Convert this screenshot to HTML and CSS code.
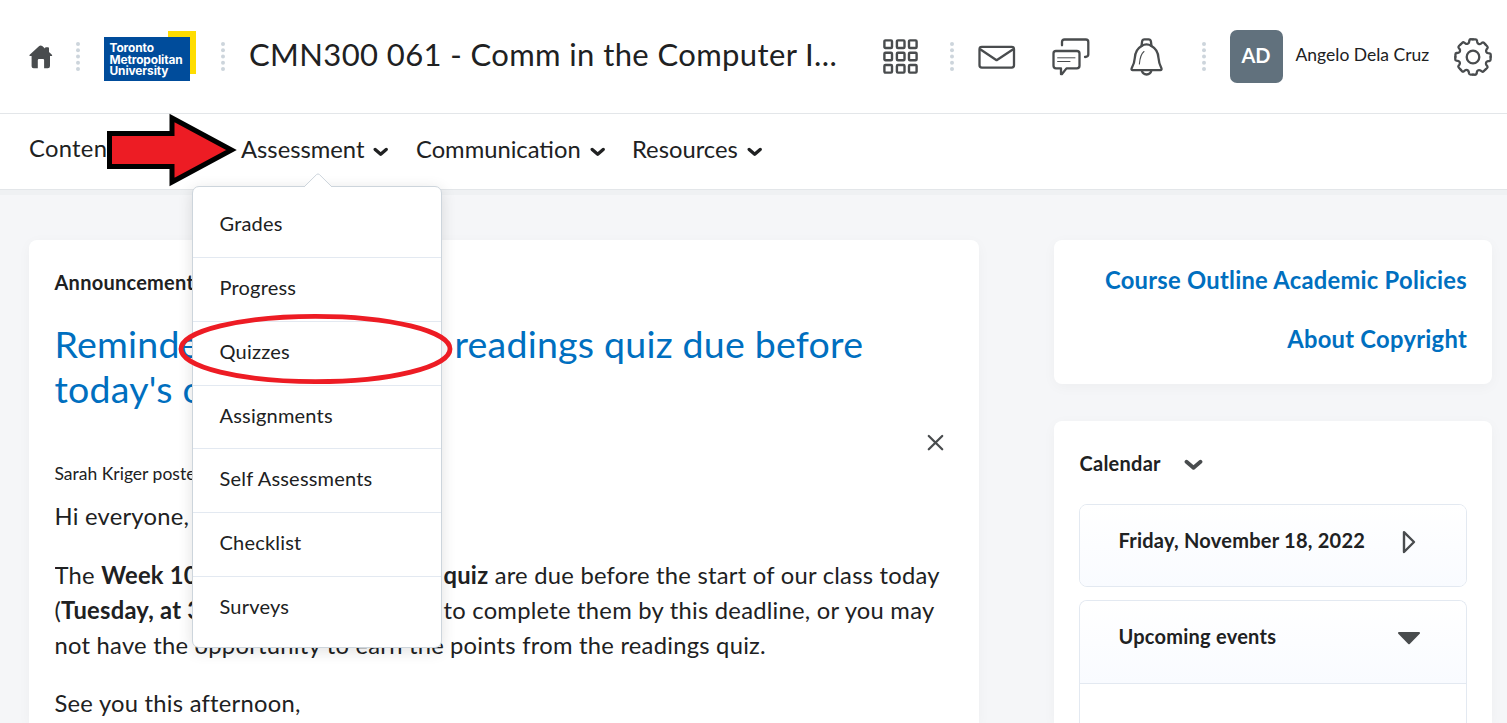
FILE: index.html
```html
<!DOCTYPE html>
<html lang="en">
<head>
<meta charset="utf-8">
<title>CMN300 061 - Comm in the Computer I...</title>
<link rel="stylesheet" href="styles.css">
</head>
<body>
<svg class="defs" width="0" height="0" aria-hidden="true">
  <defs>
    <g id="dots" fill="#cdd5dc"><circle cx="2" cy="2" r="2"/><circle cx="2" cy="8.3" r="2"/><circle cx="2" cy="14.5" r="2"/><circle cx="2" cy="20.8" r="2"/><circle cx="2" cy="27" r="2"/></g>
    <path id="chev" d="M2.2 2.4L7.7 7.2L13.2 2.4" fill="none" stroke-width="3.3" stroke-linecap="round" stroke-linejoin="round"/>
    <path id="tooth" d="M0-17.6H2.4Q3.8-17.6 4-16.4L4.2-15Q4.5-13.6 5.6-13.1Q6.9-12.6 8-13.4L9.1-14.3Q10.1-15 11-14.1L12.5-12.5"/>
  </defs>
</svg>

<header class="topbar">
  <svg class="icon home" width="24" height="24" viewBox="0 0 24 24"><path d="M10.2 1.1Q11.7-.1 13.2 1.1L16 3.5V3.1Q16 2.2 17 2.2H19Q20 2.2 20 3.2V7L22.9 9.7Q23.6 10.8 22.5 11.1H21V21Q21 23.3 18.8 23.3H15.1V15.2Q15.1 14.1 14 14.1H10Q8.8 14.1 8.8 15.2V23.3H4.6Q2.6 23.3 2.6 21.2V11.1H1.1Q0 10.8.7 9.7Z" fill="#494c4e"/></svg>
  <svg class="dots d1" width="4" height="29"><use href="#dots"/></svg>
  <div class="logo"><div class="logo-mark">Toronto<br>Metropolitan<br>University</div></div>
  <svg class="dots d2" width="4" height="29"><use href="#dots"/></svg>
  <div class="course-title">CMN300 061 - Comm in the Computer I...</div>
  <svg class="icon apps" width="36" height="36" viewBox="0 0 36 36" fill="none" stroke="#494c4e" stroke-width="2.4">
    <rect x="1.4" y="1.4" width="7.6" height="7.6" rx="1"/><rect x="13.9" y="1.4" width="7.6" height="7.6" rx="1"/><rect x="26" y="1.4" width="7.6" height="7.6" rx="1"/>
    <rect x="1.4" y="13.7" width="7.6" height="7.6" rx="1"/><rect x="13.9" y="13.7" width="7.6" height="7.6" rx="1"/><rect x="26" y="13.7" width="7.6" height="7.6" rx="1"/>
    <rect x="1.4" y="26" width="7.6" height="7.6" rx="1"/><rect x="13.9" y="26" width="7.6" height="7.6" rx="1"/><rect x="26" y="26" width="7.6" height="7.6" rx="1"/>
  </svg>
  <svg class="dots d3" width="4" height="29"><use href="#dots"/></svg>
  <svg class="icon mail" width="38" height="24" viewBox="0 0 38 24" fill="none" stroke="#494c4e" stroke-width="2.3" stroke-linejoin="round"><rect x="1.5" y="1.9" width="34.5" height="20.7" rx="2.3"/><path d="M2.2 4.2L18.6 15.2L35.2 4.2"/></svg>
  <svg class="icon chat" width="38" height="38" viewBox="0 0 38 38" fill="none" stroke="#494c4e" stroke-width="2.3" stroke-linecap="round" stroke-linejoin="round"><path d="M10 7.3V4Q10 1.5 12.5 1.5H33.8Q36.3 1.5 36.3 4V16.5Q36.3 18.8 33 19"/><path d="M4 13H24.8Q27.5 13 27.5 15.6V27.8Q27.5 30.4 24.8 30.4H14.5L9.8 36.2H9V30.4H4Q1.5 30.4 1.5 27.8V15.6Q1.5 13 4 13Z"/><path d="M5.6 19.8H23M5.6 23.5H18" stroke-width="1"/></svg>
  <svg class="icon bell" width="34" height="38" viewBox="0 0 34 38" fill="none" stroke="#494c4e" stroke-width="2.3" stroke-linecap="round" stroke-linejoin="round"><path d="M11.5 8L12.1 3.4Q12.4 1.4 14.5 1.4H18.5Q20.6 1.4 20.9 3.4L21.5 8"/><path d="M11.5 8Q16.5 4.6 21.5 8C26.5 10.7 28.2 14.8 28.5 20Q28.7 24.7 31.5 30.5Q31.8 32.1 30.5 32.1H2.6Q1.2 32.1 1.6 30.5Q4.6 24.7 4.8 20C5.1 14.8 6.8 10.7 11.5 8Z"/><path d="M11.8 32.6C13 37.8 20.2 37.8 21.4 32.6"/><path d="M14 13.5C10.7 16 9.9 20 9.4 26" stroke-width="1.1"/></svg>
  <svg class="dots d4" width="4" height="29"><use href="#dots"/></svg>
  <div class="avatar">AD</div>
  <div class="user-name">Angelo Dela Cruz</div>
  <svg class="icon gear" width="38" height="38" viewBox="-19 -19 38 38" fill="none" stroke="#494c4e" stroke-width="2.3" stroke-linecap="round"><circle r="6.3"/><use href="#tooth"/><use href="#tooth" transform="rotate(45)"/><use href="#tooth" transform="rotate(90)"/><use href="#tooth" transform="rotate(135)"/><use href="#tooth" transform="rotate(180)"/><use href="#tooth" transform="rotate(225)"/><use href="#tooth" transform="rotate(270)"/><use href="#tooth" transform="rotate(315)"/></svg>
</header>

<nav class="navbar">
  <div class="nav-item content">Content</div>
  <div class="nav-item assessment">Assessment<svg class="chev" width="16" height="10" stroke="#202122"><use href="#chev"/></svg>
    <div class="menu">
      <svg class="menu-tip" width="30" height="15" viewBox="0 0 30 15"><path d="M1 14L13.5 1.6Q15 .2 16.5 1.6L29 14V15H1Z" fill="#fff"/><path d="M1 14L13.5 1.6Q15 .2 16.5 1.6L29 14" fill="none" stroke="#cdd5dc"/></svg>
      <div class="menu-row">Grades</div>
      <div class="menu-row">Progress</div>
      <div class="menu-row">Quizzes</div>
      <div class="menu-row">Assignments</div>
      <div class="menu-row">Self Assessments</div>
      <div class="menu-row">Checklist</div>
      <div class="menu-row">Surveys</div>
    </div>
  </div>
  <div class="nav-item communication">Communication<svg class="chev" width="16" height="10" stroke="#202122"><use href="#chev"/></svg></div>
  <div class="nav-item resources">Resources<svg class="chev" width="16" height="10" stroke="#202122"><use href="#chev"/></svg></div>
</nav>

<main class="page">
  <section class="card announcements">
    <h2 class="widget-title">Announcements</h2>
    <div class="headline"><span class="lead">Reminder: Week 10</span>readings quiz due before<br>today's class</div>
    <div class="byline"><span>Sarah Kriger posted</span></div>
    <svg class="close" width="17" height="17" viewBox="0 0 17 17"><path d="M1.8 2L15.2 15.2M15.2 2L1.8 15.2" stroke="#494c4e" stroke-width="2.3" stroke-linecap="round"/></svg>
    <p class="text">Hi everyone,</p>
    <p class="text"><span class="lead l1">The <b>Week 10 readings</b></span><b>quiz</b> are due before the start of our class today<br><span class="lead l2">(<b>Tuesday, at 3 pm</b>). Be sure</span>to complete them by this deadline, or you may<br><span class="lead l3">not have the opportunity to earn the</span>points from the readings quiz.</p>
    <p class="text">See you this afternoon,</p>
  </section>
  <aside class="side">
    <section class="card links">
      <a>Course Outline Academic Policies</a>
      <a>About Copyright</a>
    </section>
    <section class="card calendar">
      <h2 class="widget-title">Calendar<svg class="cal-chev" width="19" height="12" viewBox="0 0 19 12"><path d="M2.5 2.7L9.5 8.8L16.5 2.7" fill="none" stroke="#494c4e" stroke-width="3.8" stroke-linecap="round" stroke-linejoin="round"/></svg></h2>
      <div class="panel"><div class="panel-head">Friday, November 18, 2022<svg class="tri" width="24" height="24" viewBox="0 0 24 24"><path d="M7 2.2V22L17 12Z" fill="none" stroke="#494c4e" stroke-width="2.4" stroke-linejoin="round"/></svg></div></div>
      <div class="panel upcoming"><div class="panel-head">Upcoming events<svg class="tri" width="24" height="24" viewBox="0 0 24 24"><path d="M2 7H22L12 17.2Z" fill="#494c4e" stroke="#494c4e" stroke-width="2" stroke-linejoin="round"/></svg></div></div>
    </section>
  </aside>
</main>

<svg class="marks" width="1507" height="723" viewBox="0 0 1507 723">
  <path d="M109.5 133.5H172V118L231.5 150L172 182V166.5H109.5Z" fill="#ed1c24" stroke="#000" stroke-width="5"/>
  <ellipse cx="315.5" cy="349" rx="134.5" ry="32.7" fill="none" stroke="#ed1c24" stroke-width="4.8"/>
</svg>
</body>
</html>
```

FILE: styles.css
```css
* { box-sizing: border-box; }
body {
  margin: 0;
  width: 1507px;
  height: 723px;
  overflow: hidden;
  position: relative;
  background: #f5f6f8;
  color: #202122;
  font-family: Lato, "Open Sans", sans-serif;
  font-size: 23.75px;
  line-height: 35px;
}
.defs { position: absolute; }
svg { display: block; flex: none; }

.topbar {
  display: flex;
  align-items: center;
  height: 114px;
  padding-left: 28.5px;
  background: #fff;
  border-bottom: 1px solid #e3e6e9;
}
.d1 { margin-left: 23.5px; }
.logo {
  flex: none;
  width: 92px;
  height: 50px;
  margin: 0 0 1px 24px;
  padding-top: 6px;
  background: linear-gradient(#ffdd00, #ffdd00) 64px 0 / 28px 43px no-repeat;
}
.logo-mark {
  width: 86px;
  height: 44px;
  padding: 5px 0 0 5.5px;
  background: #004c9b;
  color: #fff;
  font: 700 11.9px/11.7px Inter, sans-serif;
  letter-spacing: -0.1px;
  white-space: nowrap;
}
.d2 { margin-left: 25px; }
.course-title {
  flex: none;
  width: 658px;
  padding: 0 0 5px 24px;
  font-size: 31px;
  line-height: 40px;
  letter-spacing: 0.39px;
  white-space: nowrap;
}
.d3 { margin-left: 31px; }
.mail { margin-left: 23.5px; }
.chat { margin-left: 36.5px; }
.bell { margin-left: 39.5px; }
.d4 { margin-left: 38px; }
.avatar {
  flex: none;
  width: 53px;
  height: 53px;
  margin-left: 24px;
  border-radius: 7px;
  background: #61717d;
  color: #fff;
  font-size: 20px;
  font-weight: 700;
  line-height: 50px;
  text-align: center;
}
.user-name {
  flex: none;
  width: 158px;
  margin-left: 13px;
  padding-bottom: 5px;
  font-size: 17.5px;
  white-space: nowrap;
}

.navbar {
  position: relative;
  z-index: 2;
  display: flex;
  height: 76px;
  padding: 18px 0 0 29px;
  background: #fff;
  border-bottom: 1px solid #e3e6e9;
  box-shadow: 0 5px 0 #eff1f3;
  white-space: nowrap;
}
.nav-item { display: flex; position: relative; }
.content { width: 212px; margin-top: -1px; letter-spacing: 0.3px; }
.assessment { width: 175px; }
.communication { width: 216px; }
.chev { margin: 15px 0 0 9px; }

.menu {
  position: absolute;
  left: -49px;
  top: 54px;
  width: 250px;
  height: 462px;
  padding-top: 7px;
  background: #fff;
  border: 1px solid #cdd5dc;
  border-radius: 7px;
  box-shadow: 0 3px 15px rgba(0, 0, 0, .12);
  font-size: 20px;
  letter-spacing: 0.2px;
}
.menu-tip { position: absolute; left: 110px; top: -14px; }
.menu-row {
  height: 63.85px;
  padding: 12px 0 0 26.5px;
  border-bottom: 1px solid #e3e9f1;
}
.menu-row:last-child { border: 0; }

.page { display: flex; gap: 75px; height: 533px; padding: 50px 15px 0 29px; }
.card {
  background: #fff;
  border-radius: 8px;
  box-shadow: 0 3px 14px rgba(0, 0, 0, .035);
}
.announcements {
  position: relative;
  width: 950px;
  height: 483px;
  padding: 25px 25.5px 0;
  border-radius: 8px 8px 0 0;
}
.widget-title {
  display: flex;
  margin: 0;
  font-size: 20px;
  line-height: 35px;
  letter-spacing: 0.25px;
}
.headline {
  margin-top: 21px;
  color: #006fbf;
  font-size: 37.5px;
  line-height: 45px;
  letter-spacing: 0.22px;
  white-space: nowrap;
}
.lead { display: inline-block; width: 400px; overflow: hidden; vertical-align: top; }
.byline { margin-top: 45px; font-size: 17.5px; line-height: 35px; }
.close { position: absolute; left: 898px; top: 194px; }
.text { margin: 0 0 23.5px; letter-spacing: 0.25px; white-space: nowrap; }
.byline + .close + .text { margin-top: 8px; }
.l1 { width: 389px; }
.l2 { width: 389px; }
.l3 { width: 395.5px; }

.side { width: 438px; }
.links {
  display: flex;
  flex-direction: column;
  align-items: flex-end;
  gap: 24px;
  height: 144px;
  padding: 23px 25px;
  color: #006fbf;
  font-weight: 700;
  letter-spacing: 0.26px;
}
.calendar {
  height: 302px;
  margin-top: 37px;
  padding: 25px 25px 0;
  border-radius: 8px 8px 0 0;
}
.calendar .widget-title { padding-left: .5px; }
.cal-chev { margin: 13px 0 0 23px; }
.panel {
  height: 83px;
  margin-top: 23px;
  border: 1px solid #e3e9f1;
  border-radius: 8px;
  overflow: hidden;
}
.panel-head {
  display: flex;
  justify-content: space-between;
  height: 82px;
  padding: 18px 45px 0 38.5px;
  background: linear-gradient(#fff, #f9fbff);
  font-size: 20px;
  font-weight: 700;
  letter-spacing: 0.24px;
}
.tri { margin-top: 7px; }
.panel.upcoming {
  height: 123px;
  margin-top: 13px;
  border-bottom: 0;
  border-radius: 8px 8px 0 0;
}
.upcoming .panel-head { height: 83px; border-bottom: 1px solid #e3e9f1; }

.marks { position: absolute; left: 0; top: 0; z-index: 5; pointer-events: none; }
```
